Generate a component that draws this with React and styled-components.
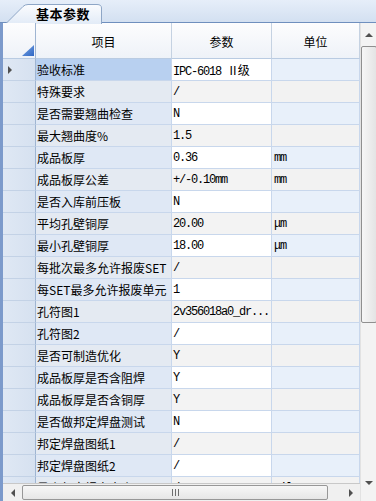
import React from "react";
import styled, { createGlobalStyle } from "styled-components";

const GlobalStyle = createGlobalStyle`
  html, body {
    margin: 0;
    padding: 0;
    overflow: hidden;
    background: #ffffff;
  }
`;

const rows = [
  ["验收标准", "IPC-6018 Ⅱ级", ""],
  ["特殊要求", "/", ""],
  ["是否需要翘曲检查", "N", ""],
  ["最大翘曲度%", "1.5", ""],
  ["成品板厚", "0.36", "mm"],
  ["成品板厚公差", "+/-0.10mm", "mm"],
  ["是否入库前压板", "N", ""],
  ["平均孔壁铜厚", "20.00", "μm"],
  ["最小孔壁铜厚", "18.00", "μm"],
  ["每批次最多允许报废SET", "/", ""],
  ["每SET最多允许报废单元", "1", ""],
  ["孔符图1", "2v356018a0_dr...", ""],
  ["孔符图2", "/", ""],
  ["是否可制造优化", "Y", ""],
  ["成品板厚是否含阻焊", "Y", ""],
  ["成品板厚是否含铜厚", "Y", ""],
  ["是否做邦定焊盘测试", "N", ""],
  ["邦定焊盘图纸1", "/", ""],
  ["邦定焊盘图纸2", "/", ""],
  ["最小邦定焊盘大小", "/", "mil"],
];

const Page = styled.div`
  width: 376px;
  height: 501px;
  display: flex;
  flex-direction: column;
  overflow: hidden;
  font-family: "Noto Sans CJK SC", "DejaVu Sans", sans-serif;
  color: #000;
`;

const TabStrip = styled.div`
  height: 22px;
  flex: none;
  display: flex;
  align-items: flex-end;
  padding-left: 5px;
  background: linear-gradient(#e6eef9, #d3e0f1);
  border-bottom: 1px solid #6f8fbe;
`;

const Tab = styled.div`
  position: relative;
  width: 97px;
  height: 19px;
  margin-bottom: -1px;
  display: flex;
  align-items: center;
  padding-left: 31px;
  box-sizing: border-box;
  font-size: 13px;
  font-weight: bold;
  letter-spacing: 0.5px;
  line-height: 1;

  svg {
    position: absolute;
    left: 0;
    top: 0;
  }

  span {
    position: relative;
  }
`;

const Body = styled.div`
  flex: 1;
  display: flex;
  min-height: 0;
`;

const Main = styled.div`
  flex: 1;
  display: flex;
  flex-direction: column;
  border-left: 3px solid #7c9acb;
  min-width: 0;
`;

const Grid = styled.div`
  flex: 1;
  overflow: hidden;
  display: grid;
  grid-template-columns: 33px 136px 100px 88px;
  grid-auto-rows: 22px;
  grid-template-rows: 36px;
  align-content: start;
  background: #ffffff;
`;

const Cell = styled.div`
  box-sizing: border-box;
  border-right: 1px solid #c8d7ec;
  border-bottom: 1px solid #c8d7ec;
  display: flex;
  align-items: center;
  font-size: 12px;
  white-space: nowrap;
  overflow: hidden;
`;

const HeadCell = styled(Cell)`
  justify-content: center;
  background: linear-gradient(#fdfdfe, #eef2f8);
  border-right-color: #c5d2e2;
  border-bottom-color: #b9cbe2;
  font-size: 12px;
  padding-top: 2px;
`;

const Corner = styled(HeadCell)`
  position: relative;
  border-right-color: #9fb5d2;

  svg {
    position: absolute;
    right: 1px;
    bottom: 2px;
  }
`;

const RowHead = styled(Cell)`
  background: linear-gradient(90deg, #dfe8f4, #d6e1f0);
  border-right-color: #9fb5d2;
  border-bottom-color: #c3d2e6;
  padding-left: 5px;
`;

const Label = styled(Cell)`
  padding-left: 1px;
  background: ${(p) => (p.$selected ? "#b8d0f0" : p.$alt ? "#e4eaf2" : "#dfe8f5")};
`;

const Value = styled(Cell)`
  padding-left: 1px;
  font-family: "Liberation Mono", "Noto Sans CJK SC", monospace;
  letter-spacing: -1.2px;
  background: ${(p) => (p.$alt ? "#f3f3f3" : "#ffffff")};
`;

const Unit = styled(Value)`
  padding-left: 2px;
  background: ${(p) => (p.$alt ? "#f2f2f2" : "#e8f0fa")};
`;

const HScroll = styled.div`
  height: 18px;
  flex: none;
  display: flex;
  align-items: center;
  background: #f0f0f0;
  border-top: 1px solid #c8c8c8;
  box-sizing: border-box;
`;

const HArrow = styled.div`
  width: 19px;
  height: 100%;
  display: flex;
  align-items: center;
  justify-content: center;
  flex: none;
`;

const HThumb = styled.div`
  width: 306px;
  height: 15px;
  box-sizing: border-box;
  border: 1px solid #979797;
  border-radius: 2px;
  background: linear-gradient(#f7f7f7, #e6e6e6);
  display: flex;
  align-items: center;
  justify-content: center;
`;

const HTrack = styled.div`
  flex: 1;
`;

const VScroll = styled.div`
  width: 16px;
  flex: none;
  display: flex;
  flex-direction: column;
  background: #f3f3f3;
  border-left: 1px solid #e2e2e2;
  box-sizing: border-box;
`;

const VArrow = styled.div`
  height: 23px;
  flex: none;
  display: flex;
  align-items: center;
  justify-content: center;
`;

const VTrack = styled.div`
  flex: 1;
  display: flex;
  flex-direction: column;
`;

const VThumb = styled.div`
  height: 277px;
  margin-right: -1px;
  box-sizing: border-box;
  border: 1px solid #8f8f8f;
  border-radius: 2px;
  background: linear-gradient(90deg, #f6f6f6, #e4e4e4);
`;

const VTail = styled.div`
  height: 7px;
  flex: none;
`;

const Tri = ({ dir }) => {
  const pts = {
    up: "0,4 4,0 8,4",
    down: "0,0 8,0 4,4",
    left: "4,0 4,8 0,4",
    right: "0,0 0,8 4,4",
  }[dir];
  const vertical = dir === "up" || dir === "down";
  return (
    <svg width={vertical ? 8 : 4} height={vertical ? 4 : 8}>
      <polygon points={pts} fill="#505050" />
    </svg>
  );
};

const Grip = () => (
  <svg width="7" height="7">
    <rect x="0" y="0" width="1" height="7" fill="#6f6f6f" />
    <rect x="3" y="0" width="1" height="7" fill="#6f6f6f" />
    <rect x="6" y="0" width="1" height="7" fill="#6f6f6f" />
  </svg>
);

export default function App() {
  return (
    <Page>
      <GlobalStyle />
      <TabStrip>
        <Tab>
          <svg width="97" height="20">
            <defs>
              <linearGradient id="tabfill" x1="0" y1="0" x2="0" y2="1">
                <stop offset="0" stopColor="#fbfcfe" />
                <stop offset="1" stopColor="#e2ebf7" />
              </linearGradient>
            </defs>
            <path
              d="M0.5 20 L18 2.5 Q20 0.5 23 0.5 L92 0.5 Q96.5 0.5 96.5 4 L96.5 20"
              fill="url(#tabfill)"
              stroke="#8ea6c6"
            />
          </svg>
          <span>基本参数</span>
        </Tab>
      </TabStrip>
      <Body>
        <Main>
          <Grid>
            <Corner>
              <svg width="12" height="11">
                <defs>
                  <linearGradient id="cornerfill" x1="0" y1="0" x2="1" y2="1">
                    <stop offset="0" stopColor="#7ba6e4" />
                    <stop offset="1" stopColor="#2f67c4" />
                  </linearGradient>
                </defs>
                <polygon points="0,11 12,11 12,0" fill="url(#cornerfill)" />
              </svg>
            </Corner>
            <HeadCell>项目</HeadCell>
            <HeadCell>参数</HeadCell>
            <HeadCell>单位</HeadCell>
            {rows.map(([label, value, unit], i) => {
              const alt = i % 2 === 1;
              return (
                <React.Fragment key={label}>
                  <RowHead>{i === 0 && <Tri dir="right" />}</RowHead>
                  <Label $alt={alt} $selected={i === 0}>
                    {label}
                  </Label>
                  <Value $alt={alt}>{value}</Value>
                  <Unit $alt={alt}>{unit}</Unit>
                </React.Fragment>
              );
            })}
          </Grid>
          <HScroll>
            <HArrow>
              <Tri dir="left" />
            </HArrow>
            <HThumb>
              <Grip />
            </HThumb>
            <HTrack />
            <HArrow>
              <Tri dir="right" />
            </HArrow>
          </HScroll>
        </Main>
        <VScroll>
          <VArrow>
            <Tri dir="up" />
          </VArrow>
          <VTrack>
            <VThumb />
          </VTrack>
          <VArrow>
            <Tri dir="down" />
          </VArrow>
          <VTail />
        </VScroll>
      </Body>
    </Page>
  );
}
